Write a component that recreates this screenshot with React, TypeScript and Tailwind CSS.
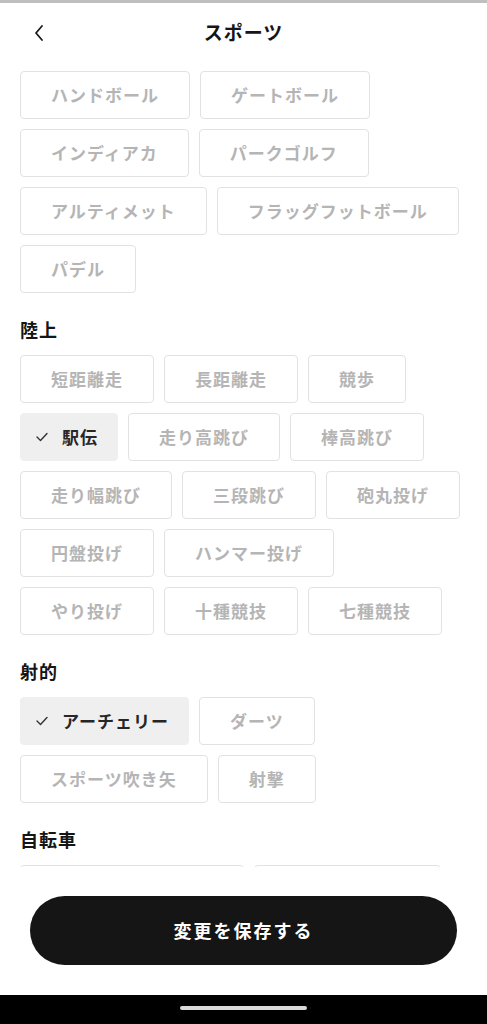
import React from 'react';

type Chip = { label: string; selected?: boolean };

const topChips: Chip[] = [
  { label: 'ハンドボール' },
  { label: 'ゲートボール' },
  { label: 'インディアカ' },
  { label: 'パークゴルフ' },
  { label: 'アルティメット' },
  { label: 'フラッグフットボール' },
  { label: 'パデル' },
];

const sections: { title: string; chips: Chip[] }[] = [
  {
    title: '陸上',
    chips: [
      { label: '短距離走' },
      { label: '長距離走' },
      { label: '競歩' },
      { label: '駅伝', selected: true },
      { label: '走り高跳び' },
      { label: '棒高跳び' },
      { label: '走り幅跳び' },
      { label: '三段跳び' },
      { label: '砲丸投げ' },
      { label: '円盤投げ' },
      { label: 'ハンマー投げ' },
      { label: 'やり投げ' },
      { label: '十種競技' },
      { label: '七種競技' },
    ],
  },
  {
    title: '射的',
    chips: [
      { label: 'アーチェリー', selected: true },
      { label: 'ダーツ' },
      { label: 'スポーツ吹き矢' },
      { label: '射撃' },
    ],
  },
  {
    title: '自転車',
    chips: [{ label: 'ロードサイクリング' }, { label: 'トラックレース' }],
  },
];

const ChipButton: React.FC<{ chip: Chip }> = ({ chip }) => {
  if (chip.selected) {
    return (
      <button className="h-[48px] flex items-center gap-[14px] pl-[15px] pr-[19px] rounded-[4px] border border-[#efefef] bg-[#efefef] text-[17px] font-bold tracking-[1px] text-[#262626]">
        <svg width="12" height="10" viewBox="0 0 12 10" fill="none">
          <polyline points="1,5 4.5,8.5 11,1.5" stroke="#333" strokeWidth="1.4" strokeLinecap="round" strokeLinejoin="round" />
        </svg>
        <span>{chip.label}</span>
      </button>
    );
  }
  return (
    <button className="h-[48px] px-[30px] rounded-[4px] border border-[#e2e2e2] bg-white text-[17px] font-bold tracking-[1px] text-[#b5b5b5]">
      {chip.label}
    </button>
  );
};

const ChipList: React.FC<{ chips: Chip[] }> = ({ chips }) => (
  <div className="flex flex-wrap gap-[10px]">
    {chips.map((c) => (
      <ChipButton key={c.label} chip={c} />
    ))}
  </div>
);

export default function App() {
  return (
    <div
      className="w-[487px] h-[1024px] flex flex-col bg-white overflow-hidden"
      style={{ fontFamily: '"Noto Sans CJK JP", "Noto Sans", sans-serif' }}
    >
      <div className="h-[3px] bg-[#bfbfbf]" />

      {/* header */}
      <div className="h-[60px] relative flex items-center justify-center">
        <button className="absolute left-[30px] top-[18px] w-[18px] h-[24px] flex items-center justify-center">
          <svg width="12" height="18" viewBox="0 0 12 18" fill="none">
            <polyline points="9,2 3,9 9,16" stroke="#1a1a1a" strokeWidth="1.8" strokeLinecap="round" strokeLinejoin="round" />
          </svg>
        </button>
        <h1 className="text-[19px] font-bold tracking-[1px] text-[#151515] -mt-[1px]">スポーツ</h1>
      </div>

      {/* scroll area */}
      <div className="flex-1 overflow-hidden px-5 pt-2">
        <ChipList chips={topChips} />
        {sections.map((s) => (
          <div key={s.title}>
            <h2 className="pt-[23px] pb-[12px] leading-[27px] text-[18px] font-bold tracking-[1px] text-[#151515]">
              {s.title}
            </h2>
            <ChipList chips={s.chips} />
          </div>
        ))}
      </div>

      {/* footer */}
      <div className="h-[128px] px-[30px] pt-[29px]">
        <button className="w-full h-[69px] rounded-full bg-[#151515] text-white text-[18px] font-bold tracking-[2px]">
          変更を保存する
        </button>
      </div>

      {/* system nav */}
      <div className="h-[29px] bg-black flex items-center justify-center">
        <div className="w-[127px] h-[4px] rounded-full bg-[#d9d9d9] -mt-[3px]" />
      </div>
    </div>
  );
}
